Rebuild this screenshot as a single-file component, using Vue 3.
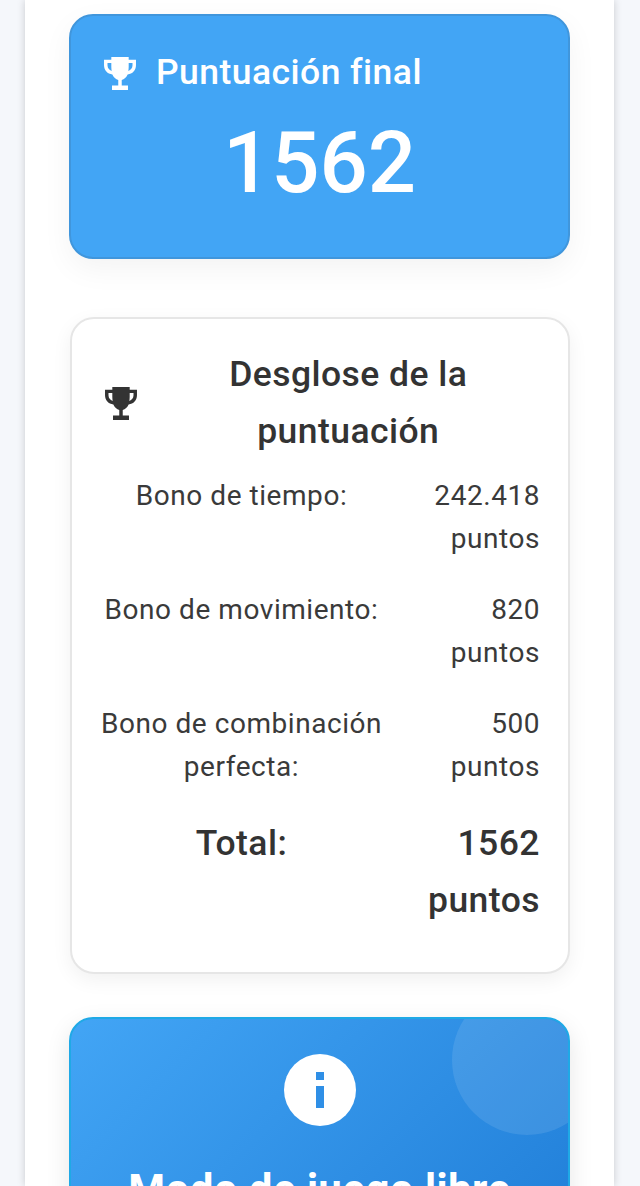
<script setup>
const rows = [
  { label: 'Bono de tiempo:', value: '242.418 puntos' },
  { label: 'Bono de movimiento:', value: '820 puntos' },
  { label: 'Bono de combinación perfecta:', value: '500 puntos' }
]
const cup = 'M7 2h10v1.6h4.2v3.2c0 2.9-2 5-4.8 5.3-.7 1.6-2 2.7-3.4 3.1v3.2h3.6V21H7.4v-2.6H11v-3.2c-1.4-.4-2.7-1.5-3.4-3.1C4.8 11.800 2.800 9.700 2.800 6.800V3.600H7V2zM7 5.400H4.800v1.400c0 1.600 1 2.800 2.400 3.200C7.100 9.300 7 8.500 7 7.700V5.400zm10 0v2.300c0 .8-.1 1.600-.2 2.300 1.400-.4 2.400-1.600 2.400-3.200V5.400H17z'
</script>

<template>
  <div class="page">
    <main class="sheet">
      <section class="final">
        <h2 class="final-title">
          <svg class="trophy" viewBox="2.8 2 18.4 19" aria-hidden="true"><path :d="cup" fill-rule="evenodd" /></svg>
          <span>Puntuación final</span>
        </h2>
        <div class="final-score">1562</div>
      </section>

      <section class="breakdown">
        <h3 class="breakdown-title">
          <svg class="trophy" viewBox="2.8 2 18.4 19" aria-hidden="true"><path :d="cup" fill-rule="evenodd" /></svg>
          <span>Desglose de la puntuación</span>
        </h3>
        <div v-for="r in rows" :key="r.label" class="row">
          <span class="label">{{ r.label }}</span>
          <span class="value">{{ r.value }}</span>
        </div>
        <div class="row total">
          <span class="label">Total:</span>
          <span class="value">1562 puntos</span>
        </div>
      </section>

      <section class="free">
        <div class="deco"></div>
        <div class="info">
          <svg viewBox="0 0 72 72" aria-hidden="true">
            <circle cx="36" cy="36" r="36" fill="#fff" />
            <rect x="32" y="18" width="8" height="8" fill="#2f8fe6" />
            <rect x="32" y="32" width="8" height="22" fill="#2f8fe6" />
          </svg>
        </div>
        <h2 class="free-title">Modo de juego libre</h2>
      </section>
    </main>
  </div>
</template>

<style>
html, body { margin: 0; background: #f5f7fb; overflow: hidden; }
</style>

<style scoped>
.page {
  height: 1186px;
  overflow: hidden;
  background: #f5f7fb;
  font-family: Roboto, "Noto Sans", sans-serif;
  color: #333;
}
.sheet {
  box-sizing: border-box;
  width: 589px;
  height: 1186px;
  margin-left: 25px;
  padding: 14px 44px 0;
  background: #fff;
  box-shadow: 0 0 8px rgba(0, 0, 0, 0.18);
  display: flex;
  flex-direction: column;
}
.final {
  flex: none;
  box-sizing: border-box;
  height: 245px;
  margin-bottom: 58px;
  padding: 27px 32px 0 33px;
  background: #42a5f5;
  border: 2px solid #4096dc;
  border-radius: 24px;
  box-shadow: 0 10px 30px rgba(0, 0, 0, 0.05);
  color: #fff;
}
.final-title {
  display: flex;
  align-items: center;
  gap: 20px;
  height: 57px;
  margin: 0;
  font-size: 35.5px;
  font-weight: 500;
  letter-spacing: 0.45px;
}
.trophy {
  flex: none;
  width: 32px;
  height: 33px;
  fill: currentColor;
}
.final-title .trophy { margin-top: 3px; }
.breakdown-title .trophy { margin-top: 1px; }
.final-score {
  margin: 2px 0 0 -1px;
  text-align: center;
  font-size: 85px;
  font-weight: 500;
  line-height: 122px;
}
.breakdown {
  flex: none;
  box-sizing: border-box;
  height: 657px;
  margin: 0 0 43px 1px;
  padding: 27px 28px 0 29px;
  background: #fff;
  border: 2px solid #e6e6e6;
  border-radius: 24px;
  box-shadow: 0 6px 20px rgba(0, 0, 0, 0.06);
}
.breakdown-title {
  display: flex;
  align-items: center;
  gap: 20px;
  margin: 0 0 15px 3.5px;
  font-size: 35.5px;
  font-weight: 500;
  line-height: 57px;
  letter-spacing: 0.45px;
  text-align: center;
}
.breakdown-title span { flex: 1; }
.row {
  display: grid;
  grid-template-columns: 281px 1fr;
  margin-bottom: 28.67px;
  font-size: 28px;
  line-height: 42.67px;
  letter-spacing: 0.55px;
  color: #3a3a3a;
}
.label { text-align: center; margin: 0 -3px; }
.value { text-align: right; margin-left: 40px; }
.total {
  margin-top: -2.5px;
  margin-bottom: 0;
  font-size: 35.5px;
  font-weight: 500;
  line-height: 57px;
  letter-spacing: 0.45px;
  color: #333;
}
.free {
  position: relative;
  flex: none;
  height: 400px;
  overflow: hidden;
  padding-top: 35px;
  box-sizing: border-box;
  background: linear-gradient(135deg, #42a5f5, #1976d2);
  border: 2px solid #1fa9e6;
  border-radius: 24px;
  box-shadow: 0 8px 24px rgba(0, 0, 0, 0.1);
  color: #fff;
  text-align: center;
}
.deco {
  position: absolute;
  top: -34px;
  right: -34px;
  width: 150px;
  height: 150px;
  border-radius: 50%;
  background: rgba(255, 255, 255, 0.1);
}
.info { position: relative; height: 72px; }
.info svg { width: 72px; height: 72px; display: block; margin: 0 auto; }
.free-title {
  position: relative;
  margin: 36px 0 0;
  font-size: 42px;
  font-weight: 700;
  line-height: 56px;
  letter-spacing: 0.45px;
}
</style>
